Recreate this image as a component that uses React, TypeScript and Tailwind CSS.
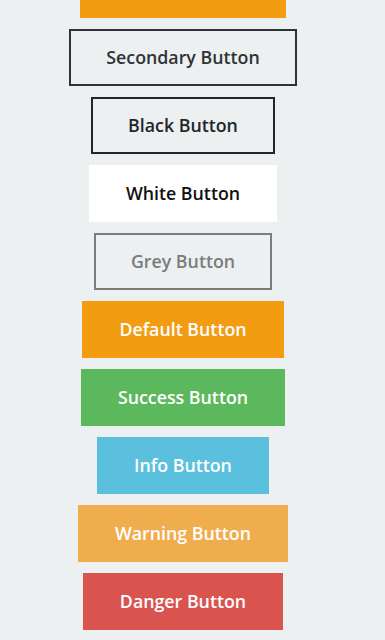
import React from "react";

const buttons = [
  { label: "Primary Button", cls: "bg-[#f39c12] border-[#f39c12] text-white" },
  { label: "Secondary Button", cls: "bg-transparent border-[#2f3337] text-[#2f3337]" },
  { label: "Black Button", cls: "bg-transparent border-[#222629] text-[#222629]" },
  { label: "White Button", cls: "bg-white border-white text-[#111]" },
  { label: "Grey Button", cls: "bg-transparent border-[#7a7c7e] text-[#7a7c7e]" },
  { label: "Default Button", cls: "bg-[#f39c12] border-[#f39c12] text-white" },
  { label: "Success Button", cls: "bg-[#5cb85c] border-[#5cb85c] text-white" },
  { label: "Info Button", cls: "bg-[#5bc0de] border-[#5bc0de] text-white" },
  { label: "Warning Button", cls: "bg-[#f0ad4e] border-[#f0ad4e] text-white" },
  { label: "Danger Button", cls: "bg-[#d9534f] border-[#d9534f] text-white" },
];

export default function App() {
  return (
    <div
      className="min-h-screen w-full bg-[#ecf0f1] overflow-hidden"
      style={{ fontFamily: '"Open Sans", sans-serif' }}
    >
      <div className="w-[366px] flex flex-col items-center gap-[11px] -mt-[39px]">
        {buttons.map((b) => (
          <button
            key={b.label}
            className={`h-[57px] border-2 px-[35px] pt-px text-[17.8px] font-semibold leading-none ${b.cls}`}
          >
            {b.label}
          </button>
        ))}
      </div>
    </div>
  );
}
